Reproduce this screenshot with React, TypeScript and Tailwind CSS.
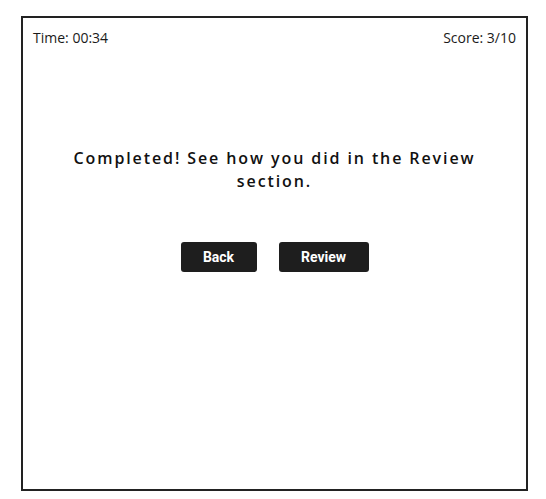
export default function App() {
  return (
    <div className="min-h-screen bg-white pt-[16px] pl-[21px]">
      <div
        className="flex h-[475px] w-[507px] flex-col border-2 border-[#222222] p-[10px] text-[#1a1a1a]"
        style={{ fontFamily: '"Open Sans", sans-serif' }}
      >
        <div className="flex justify-between text-[14px] leading-[19px]">
          <span>Time: 00:34</span>
          <span>Score: 3/10</span>
        </div>

        <h2 className="mx-auto mt-[100px] max-w-[430px] text-center text-[16px] font-semibold leading-[23px] tracking-[1.9px] text-[#111111]">
          Completed! See how you did in the Review section.
        </h2>

        <div
          className="mt-[49px] flex justify-center gap-[22px]"
          style={{ fontFamily: "Roboto, sans-serif" }}
        >
          <button className="h-[30px] w-[76px] rounded-[3px] bg-[#1e1e1e] text-[14px] font-bold text-white">
            Back
          </button>
          <button className="h-[30px] w-[90px] rounded-[3px] bg-[#1e1e1e] text-[14px] font-bold text-white">
            Review
          </button>
        </div>
      </div>
    </div>
  );
}
